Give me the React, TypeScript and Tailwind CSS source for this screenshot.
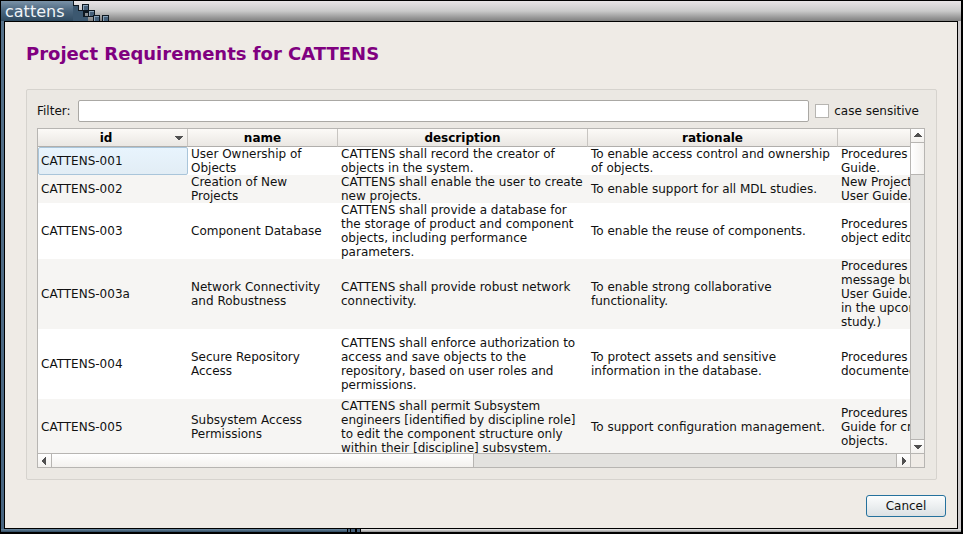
import React from "react";

type Row = { id: string; name: string; description: string; rationale: string; check: string[]; height: string };

const rows: Row[] = [
  {
    id: "CATTENS-001",
    name: "User Ownership of Objects",
    description: "CATTENS shall record the creator of objects in the system.",
    rationale: "To enable access control and ownership of objects.",
    check: ["Procedures", "Guide."],
    height: "h-[28px]",
  },
  {
    id: "CATTENS-002",
    name: "Creation of New Projects",
    description: "CATTENS shall enable the user to create new projects.",
    rationale: "To enable support for all MDL studies.",
    check: ["New Project", "User Guide."],
    height: "h-[28px]",
  },
  {
    id: "CATTENS-003",
    name: "Component Database",
    description:
      "CATTENS shall provide a database for the storage of product and component objects, including performance parameters.",
    rationale: "To enable the reuse of components.",
    check: ["Procedures", "object editor"],
    height: "h-[56px]",
  },
  {
    id: "CATTENS-003a",
    name: "Network Connectivity and Robustness",
    description: "CATTENS shall provide robust network connectivity.",
    rationale: "To enable strong collaborative functionality.",
    check: ["Procedures", "message bus", "User Guide.", "in the upcoming", "study.)"],
    height: "h-[70px]",
  },
  {
    id: "CATTENS-004",
    name: "Secure Repository Access",
    description:
      "CATTENS shall enforce authorization to access and save objects to the repository, based on user roles and permissions.",
    rationale: "To protect assets and sensitive information in the database.",
    check: ["Procedures", "documented"],
    height: "h-[70px]",
  },
  {
    id: "CATTENS-005",
    name: "Subsystem Access Permissions",
    description:
      "CATTENS shall permit Subsystem engineers [identified by discipline role] to edit the component structure only within their [discipline] subsystem.",
    rationale: "To support configuration management.",
    check: ["Procedures", "Guide for creating", "objects."],
    height: "h-[56px]",
  },
];

const arrowPaths = {
  up: "M1 6h8v-1h-1v-1h-1v-1h-1v-1h-2v1h-1v1h-1v1h-1z",
  down: "M1 3h8v1h-1v1h-1v1h-1v1h-2v-1h-1v-1h-1v-1h-1z",
  left: "M6 1v8h-1v-1h-1v-1h-1v-1h-1v-2h1v-1h1v-1h1v-1z",
  right: "M3 1v8h1v-1h1v-1h1v-1h1v-2h-1v-1h-1v-1h-1v-1z",
};

function Arrow({ dir }: { dir: keyof typeof arrowPaths }) {
  return (
    <svg width="9" height="9" viewBox="0 0 9 9" fill="#505050" aria-hidden="true">
      <path d={arrowPaths[dir]} />
    </svg>
  );
}

function ScrollButton({ dir, edge }: { dir: keyof typeof arrowPaths; edge: string }) {
  return (
    <button
      type="button"
      aria-label={`Scroll ${dir}`}
      className={`box-content flex size-[13px] shrink-0 items-center justify-center border-[#b7b5b2] bg-linear-to-b from-white to-[#f3f1ee] ${edge}`}
    >
      <Arrow dir={dir} />
    </button>
  );
}

function Block({ x, y }: { x: number; y: number }) {
  return (
    <g>
      <rect x={x} y={y} width="7" height="7" fill="#0d1720" />
      <rect x={x + 1} y={y + 1} width="5" height="5" fill="#8aa3b8" />
      <rect x={x + 2} y={y + 2} width="4" height="4" fill="#466079" />
    </g>
  );
}

function TitleBar() {
  return (
    <header className="flex h-[20px] shrink-0 bg-linear-to-b from-[#bdbdbd] via-[#c8c8c8] to-[#7c7c7c]">
      <h1 className="h-full w-[72px] bg-linear-to-b from-[#7a92a8] via-[#4a657d] to-[#2f4a60] pl-1 text-[16px] leading-[22px] text-[#f0f4f8]">
        cattens
      </h1>
      <div className="flex h-full flex-1 bg-linear-to-b from-[#e8e4e6] via-[#cacaca] to-[#808080]">
        <svg width="40" height="20" viewBox="0 0 40 20" shapeRendering="crispEdges" aria-hidden="true">
          <path d="M0 4h5v5h5v5h5v6H0z" fill="#3c5870" />
          <path d="M0.5 0v4.5h5v5h5" fill="none" stroke="#0d1720" />
          <Block x={9} y={3} />
          <Block x={15} y={9} />
          <rect x="10" y="10" width="6" height="6" fill="#0d1720" />
          <rect x="12" y="12" width="3" height="3" fill="#8b8f92" />
          <path d="M15 15.5h5v4.5" fill="none" stroke="#0d1720" />
          <Block x={20} y={14} />
          <Block x={29} y={14} />
        </svg>
      </div>
    </header>
  );
}

export default function App() {
  return (
    <div className="flex h-screen flex-col overflow-hidden border-t border-r-2 border-b-2 border-l border-black bg-[#d0d0d0] font-['DejaVu_Sans',sans-serif] text-[12px] leading-[14px] text-[#111]">
      <TitleBar />
      <div className="flex min-h-0 flex-1 bg-linear-to-b from-[#55718a] to-[#466480] pl-[3px]">
        <div className="flex min-h-0 min-w-0 flex-1 bg-[#d0cdce] pr-[3px]">
          <main className="flex min-w-0 flex-1 flex-col border border-black bg-[#efebe6] pt-[20px] pr-[11px] pb-[11px]">
            <h2 className="ml-[21px] text-[18px] leading-[24px] font-bold text-[#800080]">
              Project Requirements for CATTENS
            </h2>
            <section className="mt-[23px] mr-[9px] ml-[21px] flex min-h-0 min-w-0 flex-1 flex-col rounded-[2px] border border-[#d6d3ce] bg-[#ebe8e3] pt-[10px] pr-[11px] pb-[11px] pl-[10px]">
              <div className="flex h-[22px] shrink-0 items-center pr-[6px]">
                <label htmlFor="filter">Filter:</label>
                <input
                  id="filter"
                  className="ml-[7px] h-[22px] min-w-0 flex-1 rounded-[2px] border border-[#aaa8a4] bg-white px-1 outline-none"
                />
                <input
                  id="case"
                  type="checkbox"
                  className="ml-[6px] size-[14px] shrink-0 appearance-none border border-[#b7b5b1] bg-white"
                />
                <label htmlFor="case" className="ml-[5px] whitespace-nowrap">
                  case sensitive
                </label>
              </div>
              <div className="mt-[6px] flex min-h-0 min-w-0 flex-1 flex-col border border-[#b7b5b2] bg-white">
                <div className="flex min-h-0 min-w-0 flex-1">
                  <div className="min-w-0 flex-1 overflow-hidden">
                    <table className="w-[1050px] table-fixed border-separate border-spacing-0">
                      <colgroup>
                        <col className="w-[150px]" />
                        <col className="w-[150px]" />
                        <col className="w-[250px]" />
                        <col className="w-[250px]" />
                        <col className="w-[250px]" />
                      </colgroup>
                      <thead>
                        <tr className="h-[18px]">
                          {["id", "name", "description", "rationale", ""].map((h) => (
                            <th
                              key={h}
                              className="border-r border-b border-r-[#c8c5c1] border-b-[#b0aeab] bg-linear-to-b from-[#fcfaf7] to-[#eae7e3] p-0 text-center font-bold text-black"
                            >
                              {h === "id" ? (
                                <span className="flex items-center pr-1">
                                  <span className="flex-1">{h}</span>
                                  <Arrow dir="down" />
                                </span>
                              ) : (
                                h
                              )}
                            </th>
                          ))}
                        </tr>
                      </thead>
                      <tbody>
                        {rows.map((r, i) => (
                          <tr key={r.id} className={`${r.height} ${i % 2 ? "bg-[#f6f5f3]" : "bg-white"}`}>
                            <td className="p-0">
                              {i === 0 ? (
                                <div className="flex h-[28px] items-center rounded-[2px] border border-[#a9c5da] bg-linear-to-b from-[#e8f4fd] to-[#e2edf5] pl-[2px]">
                                  {r.id}
                                </div>
                              ) : (
                                <div className="pl-[3px]">{r.id}</div>
                              )}
                            </td>
                            <td className="px-[3px] py-0">{r.name}</td>
                            <td className="px-[3px] py-0">{r.description}</td>
                            <td className="px-[3px] py-0">{r.rationale}</td>
                            <td className="px-[3px] py-0 whitespace-nowrap">
                              {r.check.map((line) => (
                                <div key={line}>{line}</div>
                              ))}
                            </td>
                          </tr>
                        ))}
                      </tbody>
                    </table>
                  </div>
                  <div className="flex w-[14px] shrink-0 flex-col border-l border-[#b7b5b2] bg-[#e3e2df]">
                    <ScrollButton dir="up" edge="border-b" />
                    <div className="flex-1">
                      <div className="h-[32px] border-b border-[#b7b5b2] bg-linear-to-r from-white to-[#f3f1ee]" />
                    </div>
                    <ScrollButton dir="down" edge="border-t" />
                  </div>
                </div>
                <div className="flex h-[14px] shrink-0 border-t border-[#b7b5b2] bg-[#e3e2df]">
                  <ScrollButton dir="left" edge="border-r" />
                  <div className="flex-1">
                    <div className="h-full w-1/2 border-r border-[#b7b5b2] bg-linear-to-b from-white to-[#f3f1ee]" />
                  </div>
                  <ScrollButton dir="right" edge="border-x" />
                  <div className="w-[13px] bg-[#efebe6]" />
                </div>
              </div>
            </section>
            <button
              type="button"
              className="mt-[15px] h-[22px] w-[80px] shrink-0 self-end rounded-[3px] border border-[#25719d] bg-linear-to-b from-[#fcfdfd] to-[#dce1e4]"
            >
              Cancel
            </button>
          </main>
        </div>
      </div>
      <div className="flex h-[3px] shrink-0 bg-linear-to-b from-[#f0f0f0] to-[#909090]">
        <div className="w-[36%] bg-linear-to-b from-[#6d8aa3] to-[#2f4a60]" />
        <div className="w-[4px] border-x border-black bg-[#466079]" />
        <div className="w-[5px] border-r border-black bg-[#466079]" />
        <div className="w-[5px] border-x border-black bg-[#466079]" />
      </div>
    </div>
  );
}
